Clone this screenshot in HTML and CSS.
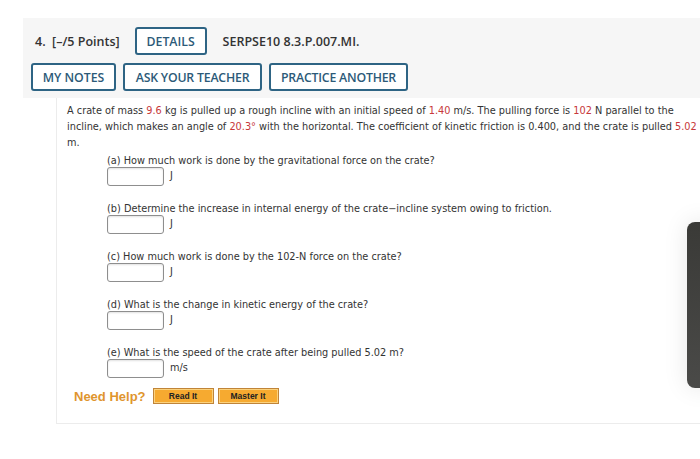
FILE: index.html
```html
<!DOCTYPE html>
<html>
<head>
  <meta charset="UTF-8">
  <title>Question 4</title>
  <link rel="stylesheet" href="styles.css">
</head>
<body>
  <div class="question">
    <div class="q-header">
      <div class="row first">
        <span class="num">4.&nbsp; [–/5 Points]</span>
        <button class="btn details">DETAILS</button>
        <span class="code">SERPSE10 8.3.P.007.MI.</span>
      </div>
      <div class="row">
        <button class="btn notes">MY NOTES</button>
        <button class="btn wide">ASK YOUR TEACHER</button>
        <button class="btn wide">PRACTICE ANOTHER</button>
      </div>
    </div>

    <div class="q-body">
      <p class="prompt">A crate of mass <span class="val">9.6</span> kg is pulled up a rough incline with an initial speed of <span class="val">1.40</span> m/s. The pulling force is <span class="val">102</span> N parallel to the incline, which makes an angle of <span class="val">20.3°</span> with the horizontal. The coefficient of kinetic friction is 0.400, and the crate is pulled <span class="val">5.02</span> m.</p>

      <div class="part">
        <div class="ask">(a) How much work is done by the gravitational force on the crate?</div>
        <div class="answer"><span class="box"></span><span class="unit">J</span></div>
      </div>
      <div class="part">
        <div class="ask">(b) Determine the increase in internal energy of the crate−incline system owing to friction.</div>
        <div class="answer"><span class="box"></span><span class="unit">J</span></div>
      </div>
      <div class="part">
        <div class="ask">(c) How much work is done by the 102-N force on the crate?</div>
        <div class="answer"><span class="box"></span><span class="unit">J</span></div>
      </div>
      <div class="part">
        <div class="ask">(d) What is the change in kinetic energy of the crate?</div>
        <div class="answer"><span class="box"></span><span class="unit">J</span></div>
      </div>
      <div class="part">
        <div class="ask">(e) What is the speed of the crate after being pulled 5.02 m?</div>
        <div class="answer"><span class="box"></span><span class="unit">m/s</span></div>
      </div>

      <div class="help">
        <span class="help-label">Need Help?</span>
        <button class="help-btn">Read It</button>
        <button class="help-btn">Master It</button>
      </div>
    </div>
  </div>

  <div class="side-tab"></div>
</body>
</html>
```

FILE: styles.css
```css
body { margin: 0; background: #fff; font-family: "Open Sans", sans-serif; color: #333; overflow: hidden; }
.question { padding-top: 18px; }
.q-header { margin-left: 23px; background: #f6f6f6; padding: 9px 0 7px 8px; }
.row { display: flex; align-items: center; gap: 7px; }
.row.first { padding-left: 4px; margin-bottom: 8px; }
.num { font-weight: 600; font-size: 12.5px; margin-right: 8px; }
.code { font-weight: 600; font-size: 12.5px; margin-left: 9px; }
.btn { font-family: "Open Sans", sans-serif; font-weight: 600; font-size: 12.3px; color: #2c5a78; background: #fff; border: 2px solid #2e6484; border-radius: 3px; height: 28px; padding: 0; display: flex; align-items: center; justify-content: center; white-space: nowrap; }
.btn.details { width: 72px; }
.btn.notes { width: 85px; }
.btn.wide { width: 139px; letter-spacing: -0.2px; }
.q-body { margin-left: 56px; border-left: 1px solid #ececec; border-bottom: 1px solid #ececec; padding: 5px 0 19px 10px; font-family: "DejaVu Sans", Verdana, sans-serif; font-size: 9.75px; color: #333; }
.prompt { margin: 0 0 3px; line-height: 16px; max-width: 632px; }
.val { color: #c7383a; }
.part { margin-left: 40px; margin-bottom: 16px; }
.ask { line-height: 13px; }
.answer { display: flex; align-items: center; gap: 6px; }
.box { width: 55px; height: 17px; border: 1px solid #8e8e8e; border-radius: 3px; box-shadow: inset 0 1px 2px rgba(0,0,0,.12); background: #fff; }
.unit { line-height: 12px; margin-top: -2px; }
.help { display: flex; align-items: center; gap: 4px; margin-left: 7px; margin-top: -6px; }
.help-label { font-family: "Liberation Sans", Arial, sans-serif; font-weight: bold; font-size: 13px; color: #e0952e; margin-right: 3px; }
.help-btn { font-family: "Liberation Sans", Arial, sans-serif; font-weight: bold; font-size: 8.5px; color: #222; width: 61px; height: 16px; padding: 0; background: #f6aa30; border: 1px solid #c08438; box-shadow: inset 0 0 0 1px #fbd27e; }
.side-tab { position: absolute; left: 687px; top: 222px; width: 30px; height: 166px; border-radius: 8px; background: linear-gradient(#3a3a37, #4a4a48); box-shadow: 0 0 24px rgba(0,0,0,.1); }
```
